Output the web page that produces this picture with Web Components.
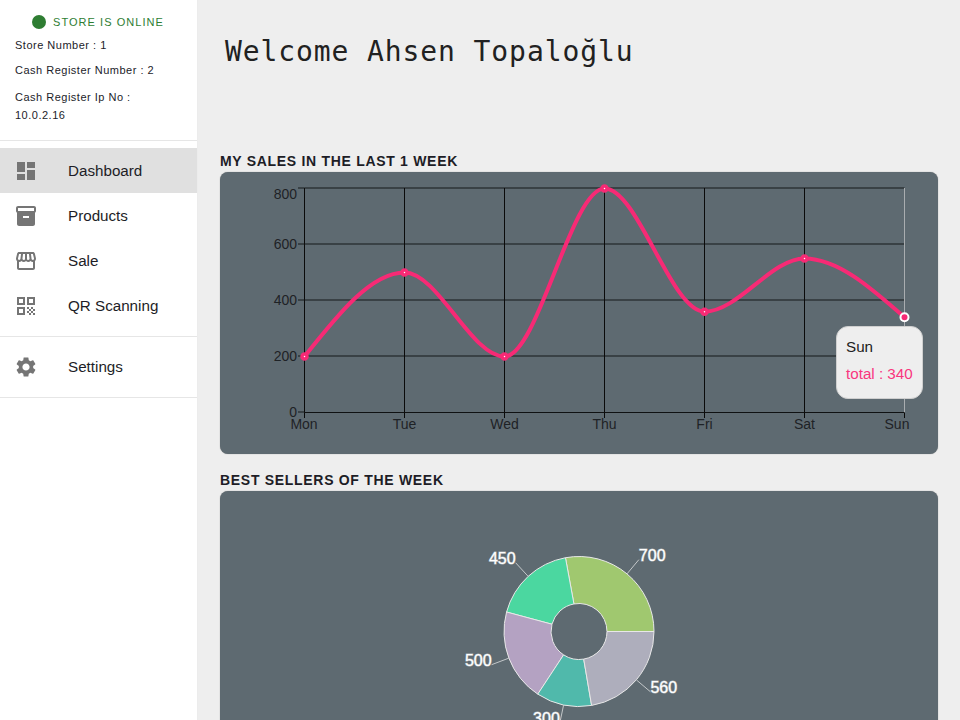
<!DOCTYPE html>
<html>
<head>
<meta charset="utf-8">
<title>Dashboard</title>
<style>
  html, body { margin: 0; height: 100%; overflow: hidden; background: #eeeeee; font-family: "Liberation Sans", Arial, sans-serif; }
</style>
</head>
<body>
<app-shell>
  <side-bar slot="side">
    <store-info></store-info>
    <nav-group>
      <nav-item icon="dashboard" selected>Dashboard</nav-item>
      <nav-item icon="products">Products</nav-item>
      <nav-item icon="sale">Sale</nav-item>
      <nav-item icon="qr">QR Scanning</nav-item>
    </nav-group>
    <nav-group>
      <nav-item icon="settings">Settings</nav-item>
    </nav-group>
  </side-bar>
  <welcome-title>Welcome Ahsen Topaloğlu</welcome-title>
  <chart-card heading="MY SALES IN THE LAST 1 WEEK"><sales-chart></sales-chart></chart-card>
  <chart-card heading="BEST SELLERS OF THE WEEK"><sellers-chart></sellers-chart></chart-card>
</app-shell>

<script>
const ICONS = {
  dashboard: 'M3 13h8V3H3v10zm0 8h8v-6H3v6zm10 0h8V11h-8v10zm0-18v6h8V3h-8z',
  products: 'M20 2H4c-1 0-2 .9-2 2v3.01c0 .72.43 1.34 1 1.69V20c0 1.1 1.1 2 2 2h14c.9 0 2-.9 2-2V8.7c.57-.35 1-.97 1-1.69V4c0-1.1-1-2-2-2zm-5 12H9v-2h6v2zm5-7H4V4l16-.02V7z',
  sale: 'M21.9 8.89l-1.05-4.37c-.22-.9-1-1.52-1.91-1.52H5.05c-.9 0-1.69.63-1.9 1.52L2.1 8.89c-.24 1.02-.02 2.06.62 2.88.08.11.19.19.28.29V19c0 1.1.9 2 2 2h14c1.1 0 2-.9 2-2v-6.94c.09-.09.2-.18.28-.28.64-.82.87-1.87.62-2.89zm-2.99-3.9l1.05 4.37c.1.42.01.84-.25 1.17-.14.18-.44.47-.94.47-.61 0-1.14-.49-1.21-1.14L16.98 5l1.93-.01zM13 5h1.96l.54 4.52c.05.39-.07.78-.33 1.07-.22.26-.54.41-.95.41-.67 0-1.22-.59-1.22-1.31V5zM8.49 9.52L9.04 5H11v4.69c0 .72-.55 1.31-1.29 1.31-.34 0-.65-.15-.89-.41-.25-.29-.37-.68-.33-1.07zm-4.45-.16L5.05 5h1.97l-.58 4.86c-.08.65-.6 1.14-1.21 1.14-.49 0-.8-.29-.93-.47-.27-.32-.36-.75-.26-1.17zM5 19v-6.03c.08.01.15.03.23.03.87 0 1.66-.36 2.24-.95.6.6 1.4.95 2.31.95.87 0 1.65-.36 2.23-.93.59.57 1.39.93 2.29.93.84 0 1.64-.35 2.24-.95.58.59 1.37.95 2.24.95.08 0 .15-.02.23-.03V19H5z',
  qr: 'M3 11h8V3H3v8zm2-6h4v4H5V5zM3 21h8v-8H3v8zm2-6h4v4H5v-4zM13 3v8h8V3h-8zm6 6h-4V5h4v4zM19 19h2v2h-2zM13 13h2v2h-2zM15 15h2v2h-2zM13 17h2v2h-2zM15 19h2v2h-2zM17 17h2v2h-2zM17 13h2v2h-2zM19 15h2v2h-2z',
  settings: 'M19.14 12.94c.04-.3.06-.61.06-.94 0-.32-.02-.64-.07-.94l2.03-1.58c.18-.14.23-.41.12-.61l-1.92-3.32c-.12-.22-.37-.29-.59-.22l-2.39.96c-.5-.38-1.03-.7-1.62-.94l-.36-2.54c-.04-.24-.24-.41-.48-.41h-3.84c-.24 0-.43.17-.47.41l-.36 2.54c-.59.24-1.13.57-1.62.94l-2.39-.96c-.22-.08-.47 0-.59.22L2.74 8.87c-.12.21-.08.47.12.61l2.03 1.58c-.05.3-.09.63-.09.94s.02.64.07.94l-2.03 1.58c-.18.14-.23.41-.12.61l1.92 3.32c.12.22.37.29.59.22l2.39-.96c.5.38 1.03.7 1.62.94l.36 2.54c.05.24.24.41.48.41h3.84c.24 0 .44-.17.47-.41l.36-2.54c.59-.24 1.13-.56 1.62-.94l2.39.96c.22.08.47 0 .59-.22l1.92-3.32c.12-.22.07-.47-.12-.61l-2.01-1.58zM12 15.6c-1.98 0-3.6-1.62-3.6-3.6s1.62-3.6 3.6-3.6 3.6 1.62 3.6 3.6-1.62 3.6-3.6 3.6z'
};

class AppShell extends HTMLElement {
  constructor() {
    super();
    this.attachShadow({ mode: 'open' });
  }

  connectedCallback() {
    this.shadowRoot.innerHTML = `
      <style>
        :host { display: flex; height: 720px; overflow: hidden; }
        main { flex: 1; min-width: 0; padding: 0 22px; }
      </style>
      <slot name="side"></slot>
      <main><slot></slot></main>
    `;
  }
}

class SideBar extends HTMLElement {
  constructor() {
    super();
    this.attachShadow({ mode: 'open' });
  }

  connectedCallback() {
    this.shadowRoot.innerHTML = `
      <style>
        :host { display: block; flex: none; width: 197px; background: #fff; border-right: 1px solid #ececec; }
      </style>
      <slot></slot>
    `;
  }
}

class StoreInfo extends HTMLElement {
  constructor() {
    super();
    this.attachShadow({ mode: 'open' });
  }

  connectedCallback() {
    this.shadowRoot.innerHTML = `
      <style>
        :host { display: block; box-sizing: border-box; height: 141px; padding: 15px 15px 0; border-bottom: 1px solid #e6e6e6; font-size: 11px; color: #1c1c2a; letter-spacing: .5px; }
        .status { display: flex; align-items: center; gap: 7px; height: 14px; padding-left: 17px; color: #2e7d32; letter-spacing: 1.05px; }
        .dot { width: 14px; height: 14px; border-radius: 50%; background: #2e7d32; }
        p { margin: 0; line-height: 18px; }
        .one { margin-top: 7px; }
        .two { margin-top: 7px; }
        .three { margin-top: 9px; }
      </style>
      <div class="status"><span class="dot"></span><span>STORE IS ONLINE</span></div>
      <p class="one">Store Number : 1</p>
      <p class="two">Cash Register Number : 2</p>
      <p class="three">Cash Register Ip No :<br>10.0.2.16</p>
    `;
  }
}

class NavGroup extends HTMLElement {
  constructor() {
    super();
    this.attachShadow({ mode: 'open' });
  }

  connectedCallback() {
    this.shadowRoot.innerHTML = `
      <style>
        :host { display: block; padding: 7px 0 8px; border-bottom: 1px solid #e6e6e6; }
      </style>
      <slot></slot>
    `;
  }
}

class NavItem extends HTMLElement {
  constructor() {
    super();
    this.attachShadow({ mode: 'open' });
  }

  connectedCallback() {
    const d = ICONS[this.getAttribute('icon')];
    this.shadowRoot.innerHTML = `
      <style>
        :host { display: flex; align-items: center; gap: 30px; height: 45px; padding-left: 14px; font-size: 15.2px; color: #1d1d26; }
        :host([selected]) { background: #e0e0e0; }
        svg { width: 24px; height: 24px; fill: #757575; flex: none; }
      </style>
      <svg viewBox="0 0 24 24"><path d="${d}"></path></svg>
      <span><slot></slot></span>
    `;
  }
}

class WelcomeTitle extends HTMLElement {
  constructor() {
    super();
    this.attachShadow({ mode: 'open' });
  }

  connectedCallback() {
    this.shadowRoot.innerHTML = `
      <style>
        :host { display: block; box-sizing: border-box; height: 150px; padding: 34px 0 0 5px; font-family: "DejaVu Sans Mono", monospace; font-size: 28px; letter-spacing: .9px; line-height: 36px; color: #212121; }
      </style>
      <slot></slot>
    `;
  }
}

class ChartCard extends HTMLElement {
  constructor() {
    super();
    this.attachShadow({ mode: 'open' });
  }

  connectedCallback() {
    this.shadowRoot.innerHTML = `
      <style>
        :host { display: block; margin-bottom: 15px; }
        h2 { margin: 0; font-size: 14px; line-height: 22px; font-weight: 700; letter-spacing: .7px; color: #1d1d26; }
        .box { position: relative; height: 282px; border-radius: 8px; background: #5e6a71; box-shadow: 0 0 1px rgba(0, 0, 0, .45); overflow: hidden; }
      </style>
      <h2>${this.getAttribute('heading')}</h2>
      <div class="box"><slot></slot></div>
    `;
  }
}

// monotone x curve: flat at every peak and dip, no overshoot
function monotonePath(pts) {
  const n = pts.length - 1;
  const sign = (v) => (v < 0 ? -1 : 1);
  const tangents = [];
  for (let i = 1; i < n; i++) {
    const h0 = pts[i][0] - pts[i - 1][0];
    const h1 = pts[i + 1][0] - pts[i][0];
    const s0 = (pts[i][1] - pts[i - 1][1]) / h0;
    const s1 = (pts[i + 1][1] - pts[i][1]) / h1;
    const p = (s0 * h1 + s1 * h0) / (h0 + h1);
    tangents[i] = (sign(s0) + sign(s1)) * Math.min(Math.abs(s0), Math.abs(s1), 0.5 * Math.abs(p)) || 0;
  }
  tangents[0] = (3 * (pts[1][1] - pts[0][1]) / (pts[1][0] - pts[0][0]) - tangents[1]) / 2;
  tangents[n] = (3 * (pts[n][1] - pts[n - 1][1]) / (pts[n][0] - pts[n - 1][0]) - tangents[n - 1]) / 2;
  let d = `M${pts[0][0]} ${pts[0][1]}`;
  for (let i = 0; i < n; i++) {
    const dx = (pts[i + 1][0] - pts[i][0]) / 3;
    d += `C${pts[i][0] + dx} ${pts[i][1] + dx * tangents[i]} ${pts[i + 1][0] - dx} ${pts[i + 1][1] - dx * tangents[i + 1]} ${pts[i + 1][0]} ${pts[i + 1][1]}`;
  }
  return d;
}

class SalesChart extends HTMLElement {
  constructor() {
    super();
    this.attachShadow({ mode: 'open' });
  }

  connectedCallback() {
    const days = ['Mon', 'Tue', 'Wed', 'Thu', 'Fri', 'Sat', 'Sun'];
    const totals = [200, 500, 200, 800, 360, 550, 340];
    const yOf = (v) => 240.5 - v * 0.28;
    const xOf = (i) => 84.5 + i * 100;
    const pts = totals.map((v, i) => [xOf(i), yOf(v)]);
    const tickLabelY = { 0: 245, 200: 189, 400: 133, 600: 77, 800: 27 };
    const dayLabelX = [84, 184.5, 284.5, 384.5, 484.5, 584.5, 677];

    let grid = '';
    [200, 400, 600, 800].forEach((v) => {
      grid += `<line class="h" x1="84.5" x2="684.5" y1="${yOf(v) - .5}" y2="${yOf(v) - .5}"></line>`;
    });
    days.forEach((_, i) => {
      if (i < 6) grid += `<line class="v" x1="${xOf(i)}" x2="${xOf(i)}" y1="16" y2="240.5"></line>`;
    });

    let axes = '';
    [0, 200, 400, 600, 800].forEach((v) => {
      axes += `<line class="h" x1="78" x2="84.5" y1="${yOf(v) - .5}" y2="${yOf(v) - .5}"></line>`;
      axes += `<text x="77" y="${tickLabelY[v]}" text-anchor="end">${v}</text>`;
    });
    days.forEach((day, i) => {
      axes += `<line class="v" x1="${xOf(i)}" x2="${xOf(i)}" y1="240.5" y2="246"></line>`;
      axes += `<text x="${dayLabelX[i]}" y="257" text-anchor="middle">${day}</text>`;
    });

    const dots = pts.slice(0, 6).map((p) => `<circle class="dot" cx="${p[0]}" cy="${p[1]}" r="2.5"></circle>`).join('');
    const last = pts[6];

    this.shadowRoot.innerHTML = `
      <style>
        :host { display: block; width: 100%; height: 100%; }
        svg { display: block; position: absolute; left: 0; top: 0; }
        text { font: 14px "Liberation Sans", Arial, sans-serif; fill: #1e2226; }
        .h { stroke: #15181a; stroke-width: 1; }
        .v { stroke: #0a0a0a; stroke-width: 1; }
        .base { stroke: #0f1112; }
        .cursor { stroke: #a9adb0; }
        .curve { fill: none; stroke: #f72a75; stroke-width: 4; }
        .dot { fill: #fff; stroke: #f72a75; stroke-width: 3.5; }
        .active { fill: #f72a75; stroke: #fff; stroke-width: 2; }
        .tip { position: absolute; left: 616px; top: 154px; box-sizing: border-box; width: 87px; height: 73px; padding: 6px 9px; border: 1px solid #cfcfcf; border-radius: 12px; background: #eeeeee; font-size: 15.2px; line-height: 27px; color: #212121; white-space: nowrap; }
        .tip span { display: block; }
        .tip .val { color: #f9367e; }
      </style>
      <svg width="718" height="282" viewBox="0 0 718 282">
        ${grid}
        <line class="base" x1="84.5" x2="684.5" y1="240.5" y2="240.5"></line>
        <line class="cursor" x1="684.5" x2="684.5" y1="16" y2="240.5"></line>
        ${axes}
        <path class="curve" d="${monotonePath(pts)}"></path>
        ${dots}
        <circle class="active" cx="${last[0]}" cy="${last[1]}" r="4"></circle>
      </svg>
      <div class="tip"><span>Sun</span><span class="val">total : 340</span></div>
    `;
  }
}

class SellersChart extends HTMLElement {
  constructor() {
    super();
    this.attachShadow({ mode: 'open' });
  }

  connectedCallback() {
    const slices = [
      { v: 700, c: '#a0c86f' },
      { v: 450, c: '#4bd7a0' },
      { v: 500, c: '#b4a2c2' },
      { v: 300, c: '#50b9ab' },
      { v: 560, c: '#aeaebc' }
    ];
    const sum = slices.reduce((s, it) => s + it.v, 0);
    const cx = 359, cy = 140.5, R = 75, r = 28;
    const at = (rad, deg) => [cx + rad * Math.cos(deg * Math.PI / 180), cy - rad * Math.sin(deg * Math.PI / 180)];
    let angle = 0;
    let body = '';
    slices.forEach((s) => {
      const end = angle + s.v / sum * 360;
      const mid = (angle + end) / 2;
      const [ax, ay] = at(R, angle);
      const [bx, by] = at(R, end);
      const [ix, iy] = at(r, end);
      const [jx, jy] = at(r, angle);
      const big = end - angle > 180 ? 1 : 0;
      body += `<path class="slice" fill="${s.c}" d="M${ax} ${ay}A${R} ${R} 0 ${big} 0 ${bx} ${by}L${ix} ${iy}A${r} ${r} 0 ${big} 1 ${jx} ${jy}Z"></path>`;
      const [lx, ly] = at(R, mid);
      const [tx, ty] = at(R + 18.5, mid);
      body += `<line class="lead" x1="${lx}" y1="${ly}" x2="${tx}" y2="${ty}"></line>`;
      const anchor = Math.cos(mid * Math.PI / 180) >= 0 ? 'start' : 'end';
      body += `<text x="${tx}" y="${ty + 1}" text-anchor="${anchor}">${s.v}</text>`;
      angle = end;
    });

    this.shadowRoot.innerHTML = `
      <style>
        :host { display: block; width: 100%; height: 100%; }
        svg { display: block; position: absolute; left: 0; top: 0; }
        .slice { stroke: #e8e8e8; stroke-width: 1; }
        .lead { stroke: #c4c8ca; stroke-width: 1; }
        text { font: 16px "Liberation Sans", Arial, sans-serif; fill: #fff; stroke: rgba(255, 255, 255, .5); stroke-width: 1; }
      </style>
      <svg width="718" height="282" viewBox="0 0 718 282">${body}</svg>
    `;
  }
}

customElements.define('app-shell', AppShell);
customElements.define('side-bar', SideBar);
customElements.define('store-info', StoreInfo);
customElements.define('nav-group', NavGroup);
customElements.define('nav-item', NavItem);
customElements.define('welcome-title', WelcomeTitle);
customElements.define('chart-card', ChartCard);
customElements.define('sales-chart', SalesChart);
customElements.define('sellers-chart', SellersChart);
</script>
</body>
</html>
